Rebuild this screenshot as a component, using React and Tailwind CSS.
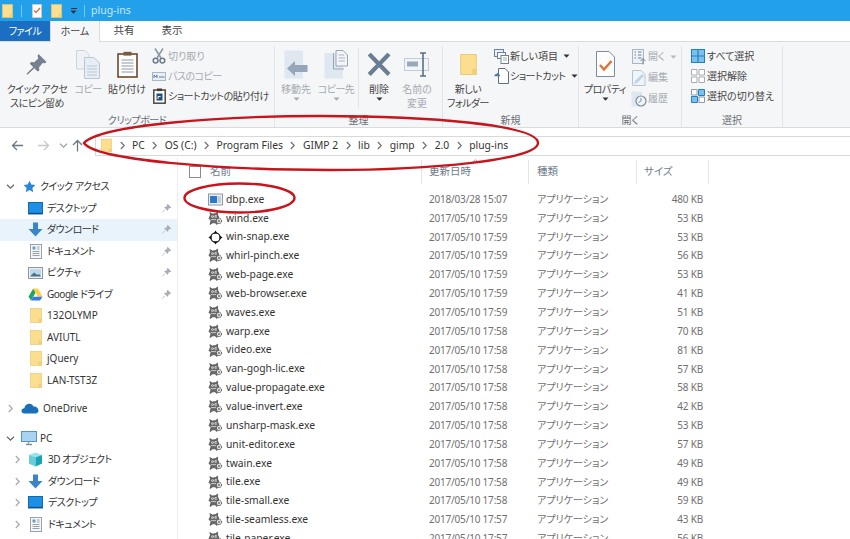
import React from "react";

const kana = (s) => (/[ァ-ヶー]/.test(s) ? "tracking-[-0.5px]" : "");

const Folder = ({ w = 12, h = 15 }) => (
  <svg width={w} height={h} viewBox="0 0 12 15" className="shrink-0">
    <rect x="0.5" y="0.5" width="11" height="14" fill="#fbdf8f" stroke="#e9c877" strokeWidth="0.7" />
    <path d="M8.5 14.5V10.5H11.5V14.5Z" fill="#f3cf74" />
  </svg>
);

const Gimp = () => (
  <svg width="15" height="15" viewBox="0 0 15 15" className="shrink-0">
    <path d="M2 13.5L3 9.5L1 7.5L2.5 4L1.8 1.6L4.2 3L7.6 2.6L9.6 1L9.6 4L11 6.6L8.6 8.2L10 10.5L9 13.5L7 11.8L4.8 11.8Z" fill="#6a6a6a" stroke="#3a3a3a" strokeWidth="0.6" />
    <circle cx="4.6" cy="5.6" r="1.2" fill="#fff" />
    <circle cx="7.8" cy="5.4" r="1.2" fill="#fff" />
    <circle cx="4.8" cy="5.8" r="0.5" fill="#111" />
    <circle cx="8" cy="5.6" r="0.5" fill="#111" />
    <path d="M3 8.6H8.4" stroke="#d4d4d4" strokeWidth="0.9" />
    <circle cx="11" cy="10" r="2.6" fill="#e4e4e4" stroke="#444" strokeWidth="1" strokeDasharray="1.4 0.7" />
    <circle cx="11" cy="10" r="0.9" fill="#666" />
  </svg>
);

const Snap = () => (
  <svg width="15" height="15" viewBox="0 0 15 15" className="shrink-0">
    <circle cx="7.5" cy="7.5" r="4.6" fill="#fff" stroke="#111" strokeWidth="1.2" />
    <path d="M7.5 0.5L9.4 3.4H5.6ZM7.5 14.5L5.6 11.6H9.4ZM0.5 7.5L3.4 5.6V9.4ZM14.5 7.5L11.6 9.4V5.6Z" fill="#111" />
  </svg>
);

const Dbp = () => (
  <svg width="15" height="13" viewBox="0 0 15 13" className="shrink-0">
    <rect x="0.5" y="1" width="14" height="11" fill="#eef1f5" stroke="#8d97a3" />
    <rect x="2" y="3" width="7" height="7" fill="#2b78c5" />
    <rect x="9.5" y="3" width="3.5" height="7" fill="#c3cbd4" />
  </svg>
);

const Pin = ({ c = "#a9adb3" }) => (
  <svg width="11" height="11" viewBox="0 0 11 11" className="shrink-0">
    <path d="M6.6 0.8L10.2 4.4L9.2 4.9L7.6 5.4L6.8 8L3 4.2L5.6 3.4L6.1 1.8ZM4 7L1 10L0.8 9.8L3.6 6.6Z" fill={c} />
  </svg>
);

const Chevron = ({ down, c = "#8a8a8a" }) => (
  <svg width="9" height="9" viewBox="0 0 9 9" className="shrink-0">
    <path d={down ? "M1 2.8L4.5 6.2L8 2.8" : "M2.8 1L6.2 4.5L2.8 8"} fill="none" stroke={c} strokeWidth="1.2" />
  </svg>
);

const Desktop = () => (
  <svg width="15" height="13" viewBox="0 0 15 13" className="shrink-0">
    <rect x="0.5" y="0.5" width="14" height="11.5" fill="#1e8fe6" stroke="#1469a8" />
    <rect x="1" y="10.8" width="13" height="1.2" fill="#0f4f82" />
  </svg>
);
const Down = () => (
  <svg width="15" height="15" viewBox="0 0 15 15" className="shrink-0">
    <path d="M5 0.5H10V7H14.5L7.5 14.5L0.5 7H5Z" fill="#3a84c9" />
  </svg>
);
const Doc = () => (
  <svg width="12" height="15" viewBox="0 0 12 15" className="shrink-0">
    <rect x="0.5" y="0.5" width="11" height="14" fill="#f4f6f8" stroke="#9aa3ad" />
    <rect x="2.5" y="2.5" width="3" height="3" fill="#6c9cc4" />
    <path d="M2.5 7.5H9.5M2.5 9.5H9.5M2.5 11.5H9.5M7 3H9.5M7 5H9.5" stroke="#8c97a3" strokeWidth="0.9" />
  </svg>
);
const Pic = () => (
  <svg width="15" height="12" viewBox="0 0 15 12" className="shrink-0">
    <rect x="0.5" y="0.5" width="14" height="11" fill="#eef2f5" stroke="#8b96a1" />
    <path d="M2 2H13V9.5H2Z" fill="#bfd9ea" />
    <path d="M2 9.5L6 5.5L9.5 8L11 7L13 9.5Z" fill="#4e7089" />
  </svg>
);
const Drive = () => (
  <svg width="15" height="13" viewBox="0 0 15 13" className="shrink-0">
    <path d="M5.2 0.5L0.5 8.8L3 12.5L7.6 4.6Z" fill="#1fa463" />
    <path d="M5.2 0.5H9.9L14.5 8.8H9.8Z" fill="#ffcf3f" />
    <path d="M3 12.5H12L14.5 8.8H5.2Z" fill="#3a78e7" />
  </svg>
);
const Cloud = () => (
  <svg width="18" height="11" viewBox="0 0 18 11" className="shrink-0">
    <path d="M3.5 10.5C1.5 10.5 0.5 9.2 0.5 7.8C0.5 6.2 1.8 5.2 3.3 5.2C3.8 2.6 5.8 0.8 8.3 0.8C10.3 0.8 11.8 2 12.6 3.6C15.3 3.4 17.5 5.2 17.5 7.5C17.5 9.5 16 10.5 14.5 10.5Z" fill="#1b6fb8" />
  </svg>
);
const Monitor = () => (
  <svg width="16" height="15" viewBox="0 0 16 15" className="shrink-0">
    <rect x="0.5" y="0.5" width="15" height="10" fill="#a8d4f2" stroke="#5b93bd" />
    <path d="M5 13.5H11" stroke="#7e8a96" strokeWidth="1.4" />
    <path d="M7.5 11V13" stroke="#9aa5b0" strokeWidth="1.4" />
  </svg>
);
const Cube = () => (
  <svg width="15" height="15" viewBox="0 0 15 15" className="shrink-0">
    <path d="M7.5 0.5L14 3V11.5L7.5 14.5L1 11.5V3Z" fill="#9ce0ea" />
    <path d="M7.5 5.5L14 3V11.5L7.5 14.5Z" fill="#1aa3b4" />
    <path d="M1 3L7.5 5.5V14.5L1 11.5Z" fill="#68cdd9" />
  </svg>
);
const Star = () => (
  <svg width="13" height="13" viewBox="0 0 13 13" className="shrink-0">
    <path d="M6.5 0.8L8.3 4.6L12.4 5.1L9.4 8L10.2 12.2L6.5 10.1L2.8 12.2L3.6 8L0.6 5.1L4.7 4.6Z" fill="#2b86d3" />
  </svg>
);

/* ribbon icons */
const BigPin = () => (
  <svg width="22" height="22" viewBox="0 0 22 22">
    <path d="M12.5 1L20.5 9L19 10.2L16.6 10L13 14.5L13.4 17.6L11.6 18.6L3.8 10.8L5 9L8.2 9.3L12.2 5.4L11.6 2.8Z" fill="#76808e" />
    <path d="M7.4 14.4L1 20.8L1.4 21.2L8 15.2Z" fill="#76808e" stroke="#76808e" />
  </svg>
);
const BigCopy = () => (
  <svg width="24" height="29" viewBox="0 0 24 29">
    <path d="M0.5 0.5H9L13 4.5V19H0.5Z" fill="#eef2f6" stroke="#ccd4dc" />
    <path d="M8.5 7.5H18L23.5 13V28.5H8.5Z" fill="#e6edf4" stroke="#b9c5d1" />
    <path d="M11 16H21M11 19H21M11 22H21M11 25H21" stroke="#b9c7d5" />
  </svg>
);
const BigPaste = () => (
  <svg width="21" height="27" viewBox="0 0 21 27">
    <rect x="1" y="3" width="19" height="23" fill="#fdfdfd" stroke="#6b4a2c" strokeWidth="1.6" />
    <rect x="6.5" y="0.8" width="8" height="3.8" fill="#7b5a3a" />
    <path d="M4.5 9H16.5M4.5 12H16.5M4.5 15H16.5M4.5 18H16.5M4.5 21H16.5" stroke="#8d99a6" />
  </svg>
);
const Scissors = () => (
  <svg width="14" height="16" viewBox="0 0 14 16">
    <path d="M3 0.5L9 10M11 0.5L5 10" stroke="#8e9aa8" strokeWidth="1.6" fill="none" />
    <circle cx="3.6" cy="12.6" r="2.4" fill="none" stroke="#6e7b8a" strokeWidth="1.5" />
    <circle cx="10.4" cy="12.6" r="2.4" fill="none" stroke="#6e7b8a" strokeWidth="1.5" />
  </svg>
);
const PathCopy = () => (
  <svg width="14" height="9" viewBox="0 0 14 9">
    <rect x="0.5" y="0.5" width="13" height="8" fill="#e9eef4" stroke="#a9b6c4" />
    <path d="M2 6V3L3.5 5L5 3V6M7 5H12.5" stroke="#5a7fa6" fill="none" />
  </svg>
);
const ShortcutPaste = () => (
  <svg width="13" height="16" viewBox="0 0 13 16">
    <rect x="0.8" y="2" width="11.4" height="13.2" fill="#fff" stroke="#3f3a36" strokeWidth="1.4" />
    <rect x="4" y="0.5" width="5" height="2.6" fill="#3f3a36" />
    <rect x="3.5" y="5.5" width="6" height="7" fill="#1f4f80" />
    <path d="M5 11V8.5H7.5" stroke="#fff" fill="none" />
  </svg>
);
const MoveTo = () => (
  <svg width="24" height="29" viewBox="0 0 24 29">
    <path d="M0.5 0.5H19V28.5H0.5Z" fill="#dfe7f0" />
    <path d="M11 11V15H23.5V22H11V26L3 18.5Z" fill="#93a6ba" />
  </svg>
);
const CopyTo = () => (
  <svg width="24" height="29" viewBox="0 0 24 29">
    <path d="M0.5 3H19V28.5H0.5Z" fill="#dfe7f0" />
    <path d="M12 0.5H19L23.5 5V16H12Z" fill="#f3f5f8" stroke="#97a5b4" />
    <path d="M9.5 3V19H20" stroke="#97a5b4" fill="none" />
    <path d="M14.5 5H20M14.5 8H21M14.5 11H21" stroke="#a8b4c1" />
  </svg>
);
const BigX = () => (
  <svg width="24" height="23" viewBox="0 0 24 23">
    <path d="M2.2 1L22 21.5M22 1L2.2 21.5" stroke="#6b7d93" strokeWidth="4.2" />
  </svg>
);
const Rename = () => (
  <svg width="26" height="25" viewBox="0 0 26 25">
    <rect x="0.5" y="6.5" width="24" height="12" fill="#f2f5f8" stroke="#c3ccd6" />
    <rect x="3" y="9.5" width="11" height="5" fill="#9aa9ba" />
    <path d="M16 1H22M16 24H22M19 1V24" stroke="#5f6f81" strokeWidth="1.6" fill="none" />
  </svg>
);
const NewItem = () => (
  <svg width="15" height="15" viewBox="0 0 15 15">
    <rect x="0.5" y="0.5" width="9" height="7" fill="#e9f0f7" stroke="#6f8197" />
    <rect x="3.5" y="3.5" width="8" height="6" fill="#f6f8fb" stroke="#6f8197" />
    <rect x="7" y="6.5" width="7.5" height="8" fill="#fff" stroke="#6f8197" />
    <path d="M9 9H13M9 11H13" stroke="#a4b0bd" />
  </svg>
);
const NewShort = () => (
  <svg width="15" height="16" viewBox="0 0 15 16">
    <path d="M4.5 0.5H11L14.5 4V15.5H4.5Z" fill="#fff" stroke="#5f6f81" />
    <path d="M0.5 7H4.5V4.5L0.5 7" fill="#4f7ba6" />
    <path d="M0.5 7.5H6" stroke="#4f7ba6" strokeWidth="1.5" />
  </svg>
);
const Props = () => (
  <svg width="19" height="26" viewBox="0 0 19 26">
    <path d="M0.5 0.5H13L18.5 6V25.5H0.5Z" fill="#fdfdfd" stroke="#7f8b98" />
    <path d="M4 14L8 18.5L15.5 10" fill="none" stroke="#d9733a" strokeWidth="2.4" />
  </svg>
);
const SmallOpen = () => (
  <svg width="14" height="16" viewBox="0 0 14 16">
    <rect x="0.5" y="0.5" width="11" height="14" fill="#eef2f6" stroke="#a9b6c4" />
    <path d="M2.5 3H4M2.5 6H4M2.5 9H4M6 3H9.5M6 6H9.5M6 9H9.5" stroke="#6e8196" />
    <path d="M11 15.5V9.5M8.5 12L11 9.5L13.5 12" stroke="#6e8ea8" fill="none" />
  </svg>
);
const Edit = () => (
  <svg width="14" height="16" viewBox="0 0 14 16">
    <path d="M0.5 0.5H9L13 4.5V15.5H0.5Z" fill="#f1f5f9" stroke="#b6c3d0" />
    <path d="M2 14L3 11L10 4L12 6L5 13Z" fill="#bcd3e6" />
  </svg>
);
const History = () => (
  <svg width="16" height="16" viewBox="0 0 16 16">
    <path d="M0.5 0.5H11V15.5H0.5Z" fill="#dfe7f0" />
    <circle cx="10" cy="10" r="5" fill="#f2f5f8" stroke="#7d8ea1" strokeWidth="1.2" />
    <path d="M10 7V10L7.5 11.5" stroke="#7d8ea1" fill="none" />
  </svg>
);
const SelAll = () => (
  <svg width="14" height="14" viewBox="0 0 14 14">
    <rect x="0.5" y="0.5" width="13" height="13" fill="#7fc0ea" stroke="#1f80c8" />
    <path d="M7 0.5V13.5M0.5 7H13.5" stroke="#1f80c8" strokeWidth="1.2" />
  </svg>
);
const SelNone = () => (
  <svg width="14" height="14" viewBox="0 0 14 14">
    <path d="M0.5 0.5H6V6H0.5ZM8 0.5H13.5V6H8ZM0.5 8H6V13.5H0.5ZM8 8H13.5V13.5H8Z" fill="#fff" stroke="#a9adb3" />
  </svg>
);
const SelInv = () => (
  <svg width="14" height="14" viewBox="0 0 14 14">
    <path d="M0.5 0.5H6V6H0.5ZM8 8H13.5V13.5H8Z" fill="#fff" stroke="#8f99a5" />
    <path d="M7.5 0.5H13.5V6.5H7.5ZM0.5 7.5H6.5V13.5H0.5Z" fill="#7fc0ea" stroke="#1f80c8" />
  </svg>
);

const Caret = ({ c = "#333" }) => (
  <svg width="7" height="4" viewBox="0 0 7 4" className="shrink-0">
    <path d="M0.5 0.5H6.5L3.5 3.8Z" fill={c} />
  </svg>
);

const Big = ({ w, icon, label, dim, caret }) => (
  <div className={`flex flex-col items-center shrink-0 ${w}`}>
    <div className="h-[36px] flex items-center justify-center">{icon}</div>
    <div className={`text-[10px] leading-[14px] text-center whitespace-pre ${kana(label)} ${dim ? "text-[#a4abb3]" : "text-[#444]"}`}>{label}</div>
    {caret && <div className="h-[5px] flex items-center"><Caret c={dim ? "#a4abb3" : "#333"} /></div>}
  </div>
);

const Small = ({ icon, label, dim, h = "h-[20px]", caret }) => (
  <div className={`flex items-center ${h} whitespace-nowrap`}>
    <div className="w-[16px] flex items-center justify-center shrink-0">{icon}</div>
    <span className={`ml-[1px] text-[10px] ${kana(label)} ${dim ? "text-[#a4abb3]" : "text-[#444]"}`}>{label}</span>
    {caret && <span className="ml-[5px]"><Caret c={dim ? "#b5bac0" : "#333"} /></span>}
  </div>
);

const Group = ({ w, title, children }) => (
  <div className={`flex flex-col shrink-0 border-r border-[#e2e4e7] ${w}`}>
    <div className="h-[68px] flex">{children}</div>
    <div className={`h-[14px] leading-[14px] text-[10px] text-center text-[#6a6f75] ${kana(title)}`}>{title}</div>
  </div>
);

const files = [
  ["dbp.exe", "2018/03/28 15:07", "480 KB", "dbp"],
  ["wind.exe", "2017/05/10 17:59", "53 KB"],
  ["win-snap.exe", "2017/05/10 17:59", "53 KB", "snap"],
  ["whirl-pinch.exe", "2017/05/10 17:59", "56 KB"],
  ["web-page.exe", "2017/05/10 17:59", "53 KB"],
  ["web-browser.exe", "2017/05/10 17:59", "41 KB"],
  ["waves.exe", "2017/05/10 17:59", "51 KB"],
  ["warp.exe", "2017/05/10 17:58", "70 KB"],
  ["video.exe", "2017/05/10 17:58", "81 KB"],
  ["van-gogh-lic.exe", "2017/05/10 17:58", "57 KB"],
  ["value-propagate.exe", "2017/05/10 17:58", "58 KB"],
  ["value-invert.exe", "2017/05/10 17:58", "42 KB"],
  ["unsharp-mask.exe", "2017/05/10 17:58", "53 KB"],
  ["unit-editor.exe", "2017/05/10 17:58", "57 KB"],
  ["twain.exe", "2017/05/10 17:58", "49 KB"],
  ["tile.exe", "2017/05/10 17:58", "49 KB"],
  ["tile-small.exe", "2017/05/10 17:58", "59 KB"],
  ["tile-seamless.exe", "2017/05/10 17:57", "43 KB"],
  ["tile-paper.exe", "2017/05/10 17:57", "56 KB"],
];

const crumbs = ["PC", "OS (C:)", "Program Files", "GIMP 2", "lib", "gimp", "2.0", "plug-ins"];

const NavItem = ({ icon, label, pin, active }) => (
  <div className={`h-[21.5px] flex items-center pl-[28px] shrink-0 ${active ? "bg-[#e8f3fb]" : ""}`}>
    <div className="w-[15px] flex items-center justify-center shrink-0">{icon}</div>
    <span className={`ml-[4px] flex-1 text-[10px] text-[#333] whitespace-nowrap ${kana(label)}`}>{label}</span>
    {pin && <span className="mr-[5px]"><Pin /></span>}
  </div>
);

const PcItem = ({ icon, label }) => (
  <div className="h-[21.5px] flex items-center pl-[13px] shrink-0">
    <div className="w-[15px] flex items-center"><Chevron c="#a8a8a8" /></div>
    <div className="w-[15px] flex items-center justify-center shrink-0">{icon}</div>
    <span className={`ml-[5px] text-[10px] text-[#333] whitespace-nowrap ${kana(label)}`}>{label}</span>
  </div>
);

export default function App() {
  return (
    <div className="relative w-[850px] h-[539px] overflow-hidden bg-white font-['Noto_Sans','Noto_Sans_CJK_JP',sans-serif] [font-feature-settings:'palt'] text-[11px] text-[#333]">
      {/* title bar */}
      <div className="h-[21px] bg-[#22a0ea] flex items-center pl-[2px]">
        <Folder w={11} h={14} />
        <div className="w-px h-[12px] bg-[#7cc6f2] ml-[8px]" />
        <div className="ml-[10px] w-[10px] h-[14px] bg-white border border-[#c9c9c9] flex items-center justify-center">
          <svg width="8" height="7" viewBox="0 0 8 7"><path d="M1 3.5L3 5.5L7 1" fill="none" stroke="#d9733a" strokeWidth="1.4" /></svg>
        </div>
        <div className="ml-[9px]"><Folder w={11} h={14} /></div>
        <div className="ml-[8px] flex flex-col items-center gap-[1px]">
          <div className="w-[6px] h-px bg-[#20303c]" />
          <Caret c="#20303c" />
        </div>
        <div className="w-px h-[12px] bg-[#7cc6f2] ml-[7px]" />
        <span className="ml-[6px] text-[10.5px] text-[#c9e8fb]">plug-ins</span>
      </div>

      {/* tabs */}
      <div className="h-[21px] flex bg-white border-b border-[#dadbdc] text-[10px]">
        <div className="w-[50px] bg-[#1b6fc2] text-white flex items-center justify-center tracking-[-0.5px]">ファイル</div>
        <div className="w-[50px] h-[21px] bg-[#f5f6f7] border-x border-[#dadbdc] flex items-center justify-center text-[#444]">ホーム</div>
        <div className="w-[48px] flex items-center justify-center text-[#444] text-[10.5px]">共有</div>
        <div className="w-[48px] flex items-center justify-center text-[#444] text-[10.5px]">表示</div>
      </div>

      {/* ribbon */}
      <div className="h-[86px] bg-[#f5f6f7] border-b border-[#dadbdc] flex pt-[4px]">
        <Group w="w-[275px]" title="クリップボード">
          <Big w="w-[74px]" icon={<BigPin />} label={"クイック アクセ\nスにピン留め"} />
          <Big w="w-[28px]" icon={<BigCopy />} label="コピー" dim />
          <Big w="w-[50px]" icon={<BigPaste />} label="貼り付け" />
          <div className="flex flex-col -ml-[1px]">
            <Small icon={<Scissors />} label="切り取り" dim />
            <Small icon={<PathCopy />} label="パスのコピー" dim />
            <Small icon={<ShortcutPaste />} label="ショートカットの貼り付け" />
          </div>
        </Group>
        <Group w="w-[168px]" title="整理">
          <Big w="w-[42px]" icon={<MoveTo />} label="移動先" dim caret />
          <Big w="w-[38px]" icon={<CopyTo />} label="コピー先" dim caret />
          <div className="w-px h-[60px] bg-[#e2e4e7] ml-[3px] mt-[2px]" />
          <Big w="w-[40px]" icon={<BigX />} label="削除" caret />
          <Big w="w-[36px]" icon={<Rename />} label={"名前の\n変更"} dim />
        </Group>
        <Group w="w-[136px]" title="新規">
          <Big w="w-[50px]" icon={<Folder w={17} h={25} />} label={"新しい\nフォルダー"} />
          <div className="flex flex-col">
            <Small icon={<NewItem />} label="新しい項目" caret />
            <Small icon={<NewShort />} label="ショートカット" caret />
          </div>
        </Group>
        <Group w="w-[103px]" title="開く">
          <Big w="w-[52px]" icon={<Props />} label="プロパティ" caret />
          <div className="flex flex-col">
            <Small icon={<SmallOpen />} label="開く" dim caret h="h-[21px]" />
            <Small icon={<Edit />} label="編集" dim h="h-[21px]" />
            <Small icon={<History />} label="履歴" dim h="h-[21px]" />
          </div>
        </Group>
        <Group w="w-[101px]" title="選択">
          <div className="flex flex-col pl-[8px]">
            <Small icon={<SelAll />} label="すべて選択" />
            <Small icon={<SelNone />} label="選択解除" />
            <Small icon={<SelInv />} label="選択の切り替え" />
          </div>
        </Group>
      </div>

      {/* address row */}
      <div className="h-[29px] pt-[6px] flex items-center">
        <div className="w-[95px] flex items-center shrink-0 pl-[11px]">
          <svg width="13" height="11" viewBox="0 0 13 11"><path d="M12 5.5H1.5M6 1L1.5 5.5L6 10" fill="none" stroke="#6f7680" strokeWidth="1.3" /></svg>
          <svg className="ml-[13px]" width="13" height="11" viewBox="0 0 13 11"><path d="M1 5.5H11.5M7 1L11.5 5.5L7 10" fill="none" stroke="#c5c8cc" strokeWidth="1.3" /></svg>
          <span className="ml-[9px]"><Chevron down c="#9aa0a6" /></span>
          <svg className="ml-[4px]" width="11" height="13" viewBox="0 0 11 13"><path d="M5.5 12.5V1.5M1 6L5.5 1.5L10 6" fill="none" stroke="#6f7680" strokeWidth="1.3" /></svg>
        </div>
        <div className="flex-1 h-[20px] border-y border-l border-[#d9d9d9] flex items-center pl-[5px] text-[10.3px] text-[#333]">
          <Folder w={11} h={15} />
          {crumbs.map((c) => (
            <React.Fragment key={c}>
              <span className="mx-[5.5px]"><Chevron c="#707070" /></span>
              <span className="whitespace-nowrap">{c}</span>
            </React.Fragment>
          ))}
        </div>
      </div>

      {/* main */}
      <div className="flex h-[382px]">
        <div className="w-[178px] shrink-0 border-r border-[#eeeeee] flex flex-col pt-[19px] overflow-hidden">
          <div className="h-[21.5px] flex items-center pl-[6px] shrink-0">
            <Chevron down c="#666" />
            <span className="ml-[8px]"><Star /></span>
            <span className={`ml-[4px] text-[10px] ${kana("ア")}`}>クイック アクセス</span>
          </div>
          <NavItem icon={<Desktop />} label="デスクトップ" pin />
          <NavItem icon={<Down />} label="ダウンロード" pin active />
          <NavItem icon={<Doc />} label="ドキュメント" pin />
          <NavItem icon={<Pic />} label="ピクチャ" pin />
          <NavItem icon={<Drive />} label="Google ドライブ" pin />
          <NavItem icon={<Folder />} label="132OLYMP" />
          <NavItem icon={<Folder />} label="AVIUTL" />
          <NavItem icon={<Folder />} label="jQuery" />
          <NavItem icon={<Folder />} label="LAN-TST3Z" />
          <div className="h-[21.5px] flex items-center pl-[6px] mt-[7px] shrink-0">
            <Chevron c="#a8a8a8" />
            <span className="ml-[6px]"><Cloud /></span>
            <span className="ml-[4px] text-[10px]">OneDrive</span>
          </div>
          <div className="h-[21.5px] flex items-center pl-[6px] mt-[8px] shrink-0">
            <Chevron down c="#666" />
            <span className="ml-[6px]"><Monitor /></span>
            <span className="ml-[3px] text-[10px]">PC</span>
          </div>
          <PcItem icon={<Cube />} label="3D オブジェクト" />
          <PcItem icon={<Down />} label="ダウンロード" />
          <PcItem icon={<Desktop />} label="デスクトップ" />
          <PcItem icon={<Doc />} label="ドキュメント" />
        </div>

        <div className="flex-1 flex flex-col overflow-hidden">
          <div className="relative grid grid-cols-[244px_107px_108px_72px] h-[33px] pt-[3px] shrink-0 text-[#6e7b8b] text-[10.5px]">
            <div className="flex items-center pl-[11px] border-r border-[#e5e5e5] h-[24px]">
              <div className="w-[12px] h-[12px] border border-[#8a8a8a] bg-white" />
              <span className="ml-[9px]">名前</span>
            </div>
            <div className="relative flex items-center pl-[7px] border-r border-[#e5e5e5] h-[24px]">
              更新日時
              <svg className="absolute left-[50px] -top-[1px]" width="7" height="4" viewBox="0 0 7 4"><path d="M0.5 3.5L3.5 0.8L6.5 3.5" fill="none" stroke="#a8a8a8" /></svg>
            </div>
            <div className="flex items-center pl-[8px] border-r border-[#e5e5e5] h-[24px]">種類</div>
            <div className="flex items-center pl-[7px] border-r border-[#e5e5e5] h-[24px]">サイズ</div>
          </div>
          {files.map(([name, date, size, kind]) => (
            <div key={name} className="grid grid-cols-[244px_107px_108px_72px] h-[18.85px] items-center shrink-0">
              <div className="flex items-center pl-[30px]">
                <span className="w-[15px] flex justify-center shrink-0">
                  {kind === "dbp" ? <Dbp /> : kind === "snap" ? <Snap /> : <Gimp />}
                </span>
                <span className="ml-[3px] text-[10.3px] text-[#333] whitespace-nowrap">{name}</span>
              </div>
              <div className="pl-[7px] text-[10px] tracking-[-0.2px] text-[#707070] whitespace-nowrap">{date}</div>
              <div className="pl-[8px] text-[10px] text-[#707070] whitespace-nowrap">アプリケーション</div>
              <div className="pr-[6px] text-[10px] tracking-[-0.2px] text-right text-[#707070] whitespace-nowrap">{size}</div>
            </div>
          ))}
        </div>
      </div>

      {/* hand drawn red marks over the screenshot */}
      <svg className="absolute inset-0 pointer-events-none" width="850" height="539" viewBox="0 0 850 539">
        <path d="M84 143C100 125 220 116 320 116C430 116 538 125 538 143C538 160 430 170 330 170C220 170 95 160 84 143Z" fill="none" stroke="#c8141c" strokeWidth="2.4" />
        <ellipse cx="239.5" cy="198" rx="55" ry="14.5" fill="none" stroke="#c8141c" strokeWidth="2.4" />
      </svg>
    </div>
  );
}
